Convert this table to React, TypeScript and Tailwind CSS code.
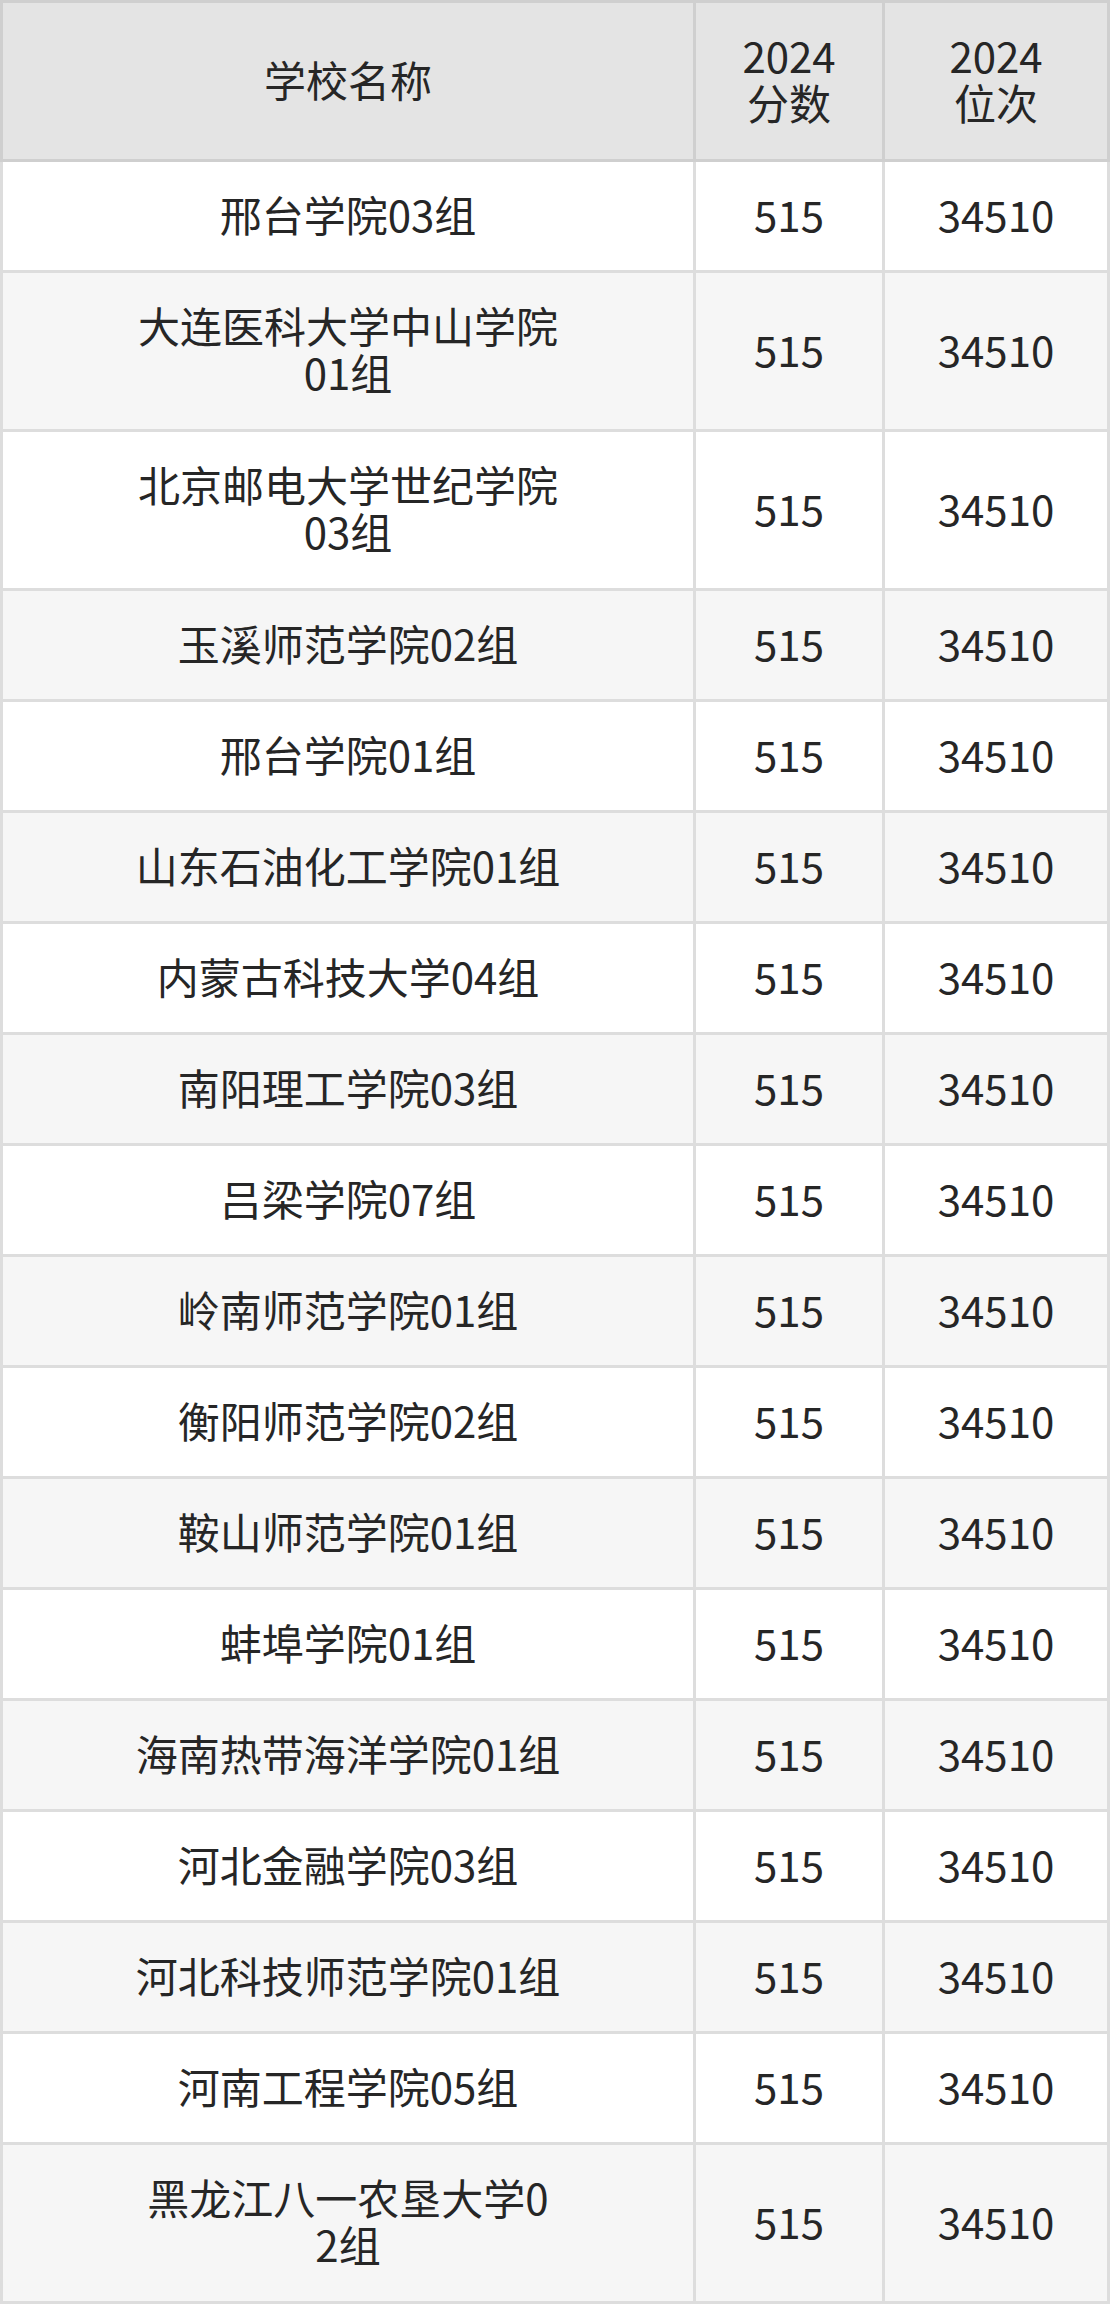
import React from "react";

const rows: { name: string[]; alt: boolean }[] = [
  { name: ["邢台学院03组"], alt: false },
  { name: ["大连医科大学中山学院", "01组"], alt: true },
  { name: ["北京邮电大学世纪学院", "03组"], alt: false },
  { name: ["玉溪师范学院02组"], alt: true },
  { name: ["邢台学院01组"], alt: false },
  { name: ["山东石油化工学院01组"], alt: true },
  { name: ["内蒙古科技大学04组"], alt: false },
  { name: ["南阳理工学院03组"], alt: true },
  { name: ["吕梁学院07组"], alt: false },
  { name: ["岭南师范学院01组"], alt: true },
  { name: ["衡阳师范学院02组"], alt: false },
  { name: ["鞍山师范学院01组"], alt: true },
  { name: ["蚌埠学院01组"], alt: false },
  { name: ["海南热带海洋学院01组"], alt: true },
  { name: ["河北金融学院03组"], alt: false },
  { name: ["河北科技师范学院01组"], alt: true },
  { name: ["河南工程学院05组"], alt: false },
  { name: ["黑龙江八一农垦大学0", "2组"], alt: true },
];

export default function App() {
  return (
    <div
      className="w-[1110px] bg-white text-[42px] leading-[47px] text-[#262626]"
      style={{ fontFamily: '"Noto Sans CJK SC", "Noto Sans", sans-serif' }}
    >
      <div className="flex h-[162px] border-t-[3px] border-l-[3px] border-[#cfcfcf] bg-[#e4e4e4]">
        <div className="w-[693px] flex items-center justify-center pb-[6px] border-r-[3px] border-b-[3px] border-[#cfcfcf] text-center">
          学校名称
        </div>
        <div className="w-[189px] flex flex-col items-center justify-center pb-[6px] border-r-[3px] border-b-[3px] border-[#cfcfcf] text-center">
          <span>2024</span>
          <span>分数</span>
        </div>
        <div className="w-[225px] flex flex-col items-center justify-center pb-[6px] border-r-[3px] border-b-[3px] border-[#cfcfcf] text-center">
          <span>2024</span>
          <span>位次</span>
        </div>
      </div>
      {rows.map((r, i) => (
        <div
          key={i}
          className={`flex border-l-[3px] border-[#dddddd] ${r.name.length > 1 ? "h-[159px]" : "h-[111px]"} ${r.alt ? "bg-[#f6f6f6]" : "bg-white"}`}
        >
          <div className="w-[693px] flex flex-col items-center justify-center pb-[6px] border-r-[3px] border-b-[3px] border-[#dddddd] text-center">
            {r.name.map((l, j) => (
              <span key={j}>{l}</span>
            ))}
          </div>
          <div className="w-[189px] flex items-center justify-center pb-[6px] border-r-[3px] border-b-[3px] border-[#dddddd]">
            515
          </div>
          <div className="w-[225px] flex items-center justify-center pb-[6px] border-r-[3px] border-b-[3px] border-[#dddddd]">
            34510
          </div>
        </div>
      ))}
    </div>
  );
}
